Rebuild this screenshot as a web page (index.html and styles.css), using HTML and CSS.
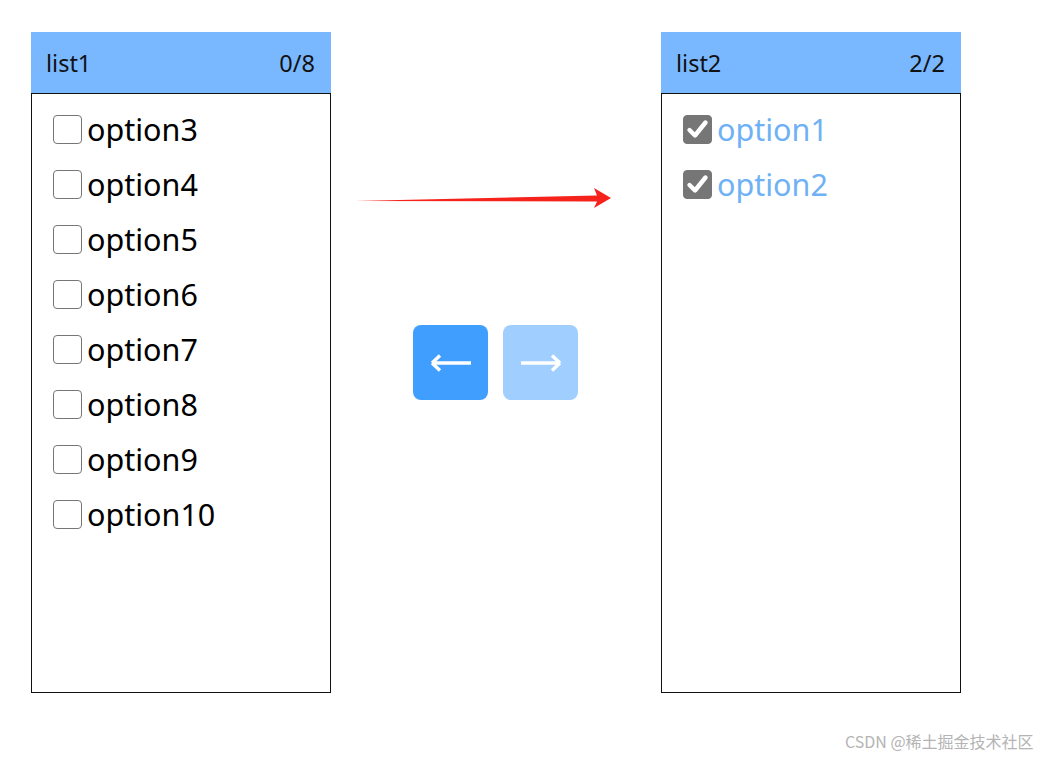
FILE: index.html
```html
<!DOCTYPE html>
<html>
<head>
<meta charset="utf-8">
<link rel="stylesheet" href="styles.css">
</head>
<body>
<div class="page">
  <div class="panel">
    <div class="panel-head"><span>list1</span><span>0/8</span></div>
    <div class="panel-body">
      <label class="item"><span class="box"></span><span class="label">option3</span></label>
      <label class="item"><span class="box"></span><span class="label">option4</span></label>
      <label class="item"><span class="box"></span><span class="label">option5</span></label>
      <label class="item"><span class="box"></span><span class="label">option6</span></label>
      <label class="item"><span class="box"></span><span class="label">option7</span></label>
      <label class="item"><span class="box"></span><span class="label">option8</span></label>
      <label class="item"><span class="box"></span><span class="label">option9</span></label>
      <label class="item"><span class="box"></span><span class="label">option10</span></label>
    </div>
  </div>
  <div class="middle">
    <button class="btn btn-active" type="button">
      <svg width="44" height="24" viewBox="0 0 44 24"><path d="M3 12 H42 M3 12 L11 4.5 M3 12 L11 19.5" stroke="#fff" stroke-width="3.4" fill="none" stroke-linecap="butt" stroke-linejoin="miter"/></svg>
    </button>
    <button class="btn btn-disabled" type="button">
      <svg width="44" height="24" viewBox="0 0 44 24"><path d="M2 12 H41 M41 12 L33 4.5 M41 12 L33 19.5" stroke="#fff" stroke-width="3.4" fill="none" stroke-linecap="butt" stroke-linejoin="miter"/></svg>
    </button>
  </div>
  <div class="panel">
    <div class="panel-head"><span>list2</span><span>2/2</span></div>
    <div class="panel-body">
      <label class="item checked"><span class="box"><svg width="23" height="23" viewBox="0 0 23 23"><path d="M3.5 12 L9 17.5 L19.5 4.5" stroke="#fff" stroke-width="4.4" fill="none" stroke-linecap="round" stroke-linejoin="round"/></svg></span><span class="label">option1</span></label>
      <label class="item checked"><span class="box"><svg width="23" height="23" viewBox="0 0 23 23"><path d="M3.5 12 L9 17.5 L19.5 4.5" stroke="#fff" stroke-width="4.4" fill="none" stroke-linecap="round" stroke-linejoin="round"/></svg></span><span class="label">option2</span></label>
    </div>
  </div>
</div>
<svg class="red-arrow" width="270" height="40" viewBox="0 0 270 40"><polygon points="5,21 247,15.5 244,8 261,18 244,28 247,21.5" fill="#f5231b"/></svg>
<div class="watermark">CSDN @稀土掘金技术社区</div>
</body>
</html>
```
FILE: styles.css
```css
html, body {
  margin: 0;
  padding: 0;
  background: #fff;
}
body {
  width: 1038px;
  height: 760px;
  position: relative;
  overflow: hidden;
  font-family: "Noto Sans", "Open Sans", "Noto Sans CJK SC", sans-serif;
}
.page {
  display: flex;
  padding: 32px 0 0 31px;
}
.panel {
  width: 300px;
  height: 661px;
  display: flex;
  flex-direction: column;
}
.panel-head {
  height: 61px;
  background: #79b8ff;
  display: flex;
  align-items: center;
  justify-content: space-between;
  padding: 0 16px 0 15px;
  font-size: 23.5px;
  color: #111;
}
.panel-body {
  flex: 1;
  border: 1px solid #111;
  padding: 8px 0 0 21px;
  display: flex;
  flex-direction: column;
}
.item {
  height: 55px;
  display: flex;
  align-items: center;
  gap: 5px;
}
.box {
  width: 27px;
  height: 27px;
  border: 1px solid #767676;
  border-radius: 4px;
  background: #fff;
  display: flex;
  align-items: center;
  justify-content: center;
  flex: none;
}
.checked .box {
  background: #767676;
}
.label {
  font-size: 30.5px;
  color: #000;
  line-height: 1;
}
.checked .label {
  color: #6fb1f5;
}
.middle {
  width: 330px;
  display: flex;
  align-items: center;
  justify-content: center;
  gap: 15px;
  height: 661px;
  padding-right: 1px;
  box-sizing: border-box;
}
.btn {
  width: 75px;
  height: 75px;
  border: none;
  border-radius: 8px;
  display: flex;
  align-items: center;
  justify-content: center;
  padding: 0;
}
.btn-active {
  background: #409eff;
}
.btn-disabled {
  background: #a0cfff;
}
.red-arrow {
  position: absolute;
  left: 350px;
  top: 180px;
}
.watermark {
  position: absolute;
  left: 845px;
  top: 729px;
  font-size: 16px;
  color: #b4b4b4;
  font-family: "Noto Sans CJK SC", "Noto Sans", sans-serif;
}
```
